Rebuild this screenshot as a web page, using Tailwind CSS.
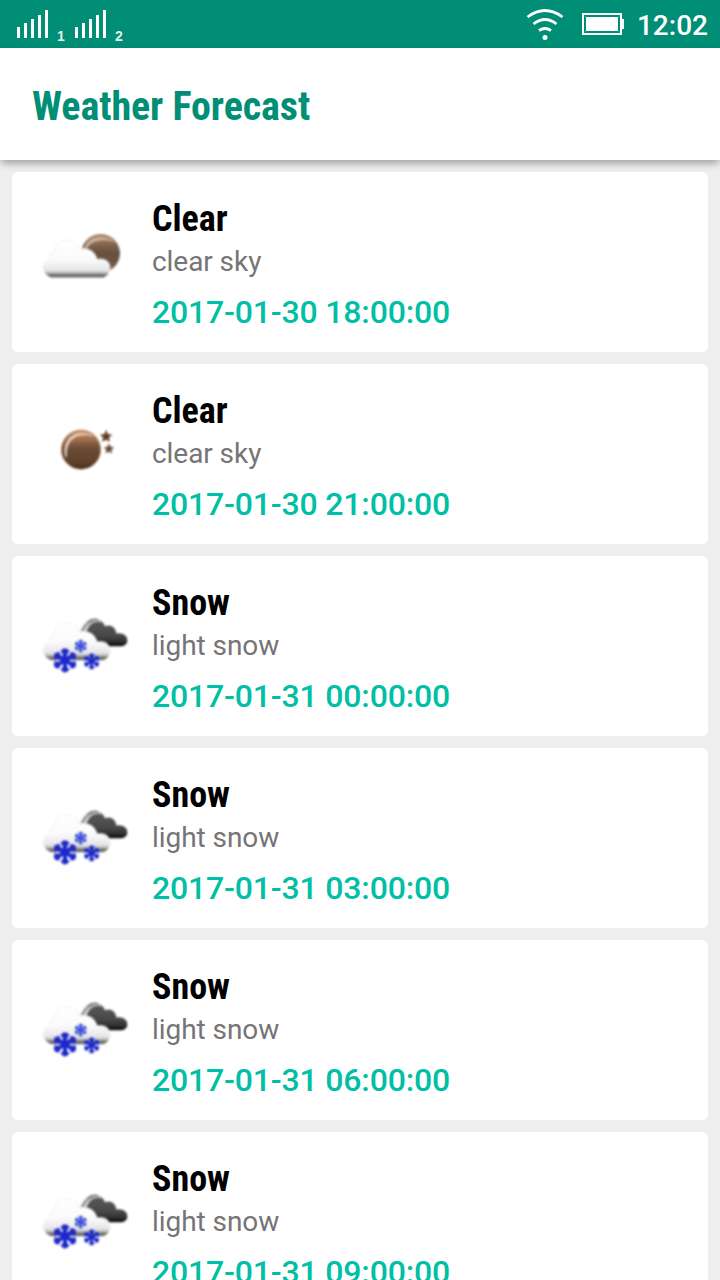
<!DOCTYPE html>
<html lang="en">
<head>
<meta charset="utf-8">
<title>Weather Forecast</title>
<script src="https://cdn.jsdelivr.net/npm/@tailwindcss/browser@4"></script>
</head>
<body class="h-[1280px] w-[720px] overflow-hidden bg-[#eeeeee] font-['Roboto',sans-serif]">
<svg class="absolute size-0" aria-hidden="true">
  <defs>
    <linearGradient id="cloud" x1="0" y1="0" x2="0" y2="1">
      <stop offset="0" stop-color="#ffffff"/><stop offset=".5" stop-color="#fbfbfb"/><stop offset=".78" stop-color="#e9e9e9"/><stop offset=".86" stop-color="#cacaca"/><stop offset=".91" stop-color="#808080"/><stop offset="1" stop-color="#555"/>
    </linearGradient>
    <linearGradient id="moon" x1="0" y1="0" x2="0" y2="1">
      <stop offset="0" stop-color="#c98f68"/><stop offset=".2" stop-color="#aa7550"/><stop offset=".42" stop-color="#755139"/><stop offset=".5" stop-color="#6b4a33"/><stop offset=".82" stop-color="#5e412c"/><stop offset="1" stop-color="#442d1e"/>
    </linearGradient>
    <linearGradient id="moonPale" x1="0" y1="0" x2="0" y2="1">
      <stop offset="0" stop-color="#b58a68"/><stop offset=".3" stop-color="#80614a"/><stop offset=".5" stop-color="#655040"/><stop offset=".75" stop-color="#705640"/><stop offset="1" stop-color="#8b6b50"/>
    </linearGradient>
    <linearGradient id="dark" x1="0" y1="0" x2="0" y2="1">
      <stop offset="0" stop-color="#5c5c5c"/><stop offset=".6" stop-color="#484848"/><stop offset=".82" stop-color="#333"/><stop offset="1" stop-color="#050505"/>
    </linearGradient>
    <path id="cloud-shape" d="M93 203C78 197 68 184 71 168C73 158 81 152 91 149C88 134 97 125 105 121C107 101 121 91 138 91C157 91 171 101 179 117C195 113 225 118 231 148C251 143 270 153 270 172C270 187 263 198 251 203Z"/>
    <g id="flake">
      <path d="M0-33V33M-29-17L29 17M29-17L-29 17" stroke-width="11"/>
      <path d="M-9-29L0-18L9-29M-9 29L0 18L9 29M-30-7L-16-9L-21-22M30 7L16 9L21 22M30-7L16-9L21-22M-30 7L-16 9L-21 22" stroke-width="9"/>
    </g>
    <symbol id="cloudy-night" viewBox="0 0 390 270">
      <circle cx="242" cy="130" r="58" fill="url(#moonPale)"/>
      <path d="M192 115C201 88 225 77 252 82C271 85 280 91 285 97C253 85 217 89 200 117Z" fill="#cbb8a8" opacity=".85"/>
      <use href="#cloud-shape" fill="url(#cloud)" stroke="#e9e9e9" stroke-width="2"/>
    </symbol>
    <symbol id="clear-night" viewBox="0 -9 390 270">
      <circle cx="183" cy="134" r="59" fill="url(#moon)" stroke="#b98b6b" stroke-width="2"/>
      <path d="M137 158C124 120 147 84 184 83C201 83 214 87 223 95C184 83 138 93 141 153Z" fill="#e6d2c4" opacity=".9"/>
      <path d="M258 77L263 88L275 90L266 97L268 109L258 103L248 109L250 97L242 90L254 88Z" fill="#603a24" stroke="#603a24" stroke-width="2"/>
      <path d="M267 117L271 126L281 128L273 134L275 144L267 139L258 144L260 134L253 128L263 126Z" fill="#704a32" stroke="#704a32" stroke-width="2"/>
    </symbol>
    <symbol id="snow" viewBox="0 -18 390 270">
      <path d="M180 99C190 69 207 54 228 56C241 58 250 65 255 79C272 72 288 83 289 101C306 96 322 106 322 121C322 133 313 139 300 139H240L224 112Z" fill="url(#dark)"/>
      <path d="M178 100C188 71 204 58 226 58C235 58 243 62 248 67C225 61 210 70 201 92L187 101Z" fill="#d0d0d0"/>
      <path d="M179 100C190 91 194 70 217 65M190 90C196 70 212 57 234 61" fill="none" stroke="#666" stroke-width="3"/>
      <use href="#cloud-shape" transform="translate(0 -22)" fill="url(#cloud)" stroke="#e9e9e9" stroke-width="2"/>
      <g fill="none" stroke="#1c28cc">
        <use href="#flake" transform="translate(135 181) scale(1.08)"/>
        <use href="#flake" transform="translate(182 138) scale(.56)" stroke="#3448d8"/>
        <use href="#flake" transform="translate(215 184) scale(.72)"/>
      </g>
    </symbol>
  </defs>
</svg>

<div class="flex h-12 items-center justify-between bg-[#008e76] text-white">
  <svg class="h-12 w-[135px]" viewBox="0 0 135 48">
    <path d="M18.5 27V38M25.5 23V38M32.5 19V38M39.5 15V38M46.5 10V38M76.5 27V38M83.5 23V38M90.5 19V38M97.5 15V38M104.5 10V38" fill="none" stroke="#fff" stroke-width="3"/>
    <g fill="#fff" fill-opacity=".9" font-family="Liberation Sans, sans-serif" font-size="14" font-weight="700"><text x="57" y="40.5">1</text><text x="115" y="40.5">2</text></g>
  </svg>
  <div class="flex h-12 items-center pr-3">
    <svg class="h-12 w-[112px]" viewBox="525 0 112 48" fill="none" stroke="#fff">
      <path d="M527.5 17Q545 4 562.5 17M533.5 24Q545 15 556.5 24M539 30.5Q545 26.5 551 30.5" stroke-width="2.8"/>
      <circle cx="545" cy="37.5" r="2.5" fill="#fff" stroke="none"/>
      <path d="M583 14H621V34H583Z" stroke-width="2"/>
      <path d="M585 16H619V32H585ZM621 19H624V29H621Z" fill="#fff" stroke="none"/>
      <path d="M585.5 16.5H618.5V31.5H585.5Z" stroke="#008e76" stroke-width="1"/>
    </svg>
    <span class="mt-[3px] text-[28px] leading-8 font-medium">12:02</span>
  </div>
</div>

<header class="flex h-28 items-center bg-white px-8 shadow-[0_4px_8px_-1px_rgba(0,0,0,0.35)]">
  <h1 class="mt-[5px] font-['Roboto_Condensed','Roboto'] text-[40px] leading-[47px] font-bold tracking-[-0.06px] text-[#008e76]">Weather Forecast</h1>
</header>

<main id="list" class="flex flex-col gap-3 p-3"></main>

<template id="row">
  <article class="flex h-[180px] shrink-0 gap-0.5 rounded-md bg-white pl-2">
    <svg class="mt-[38px] h-[90px] w-[130px] blur-[0.8px]"><use/></svg>
    <div class="pt-[26px]">
      <h2 class="font-['Roboto_Condensed','Roboto'] text-[36px] leading-[42px] font-bold text-black"></h2>
      <p class="mt-[5px] text-[28px] leading-[33px] tracking-[-0.06px] text-[#757575]"></p>
      <time class="mt-[15px] block text-[32px] leading-[38px] font-medium tracking-[-0.17px] text-[#00bfa5]"></time>
    </div>
  </article>
</template>
<script>
  const rows = [
    ['cloudy-night', 'Clear', 'clear sky', '2017-01-30 18:00:00'],
    ['clear-night', 'Clear', 'clear sky', '2017-01-30 21:00:00'],
    ['snow', 'Snow', 'light snow', '2017-01-31 00:00:00'],
    ['snow', 'Snow', 'light snow', '2017-01-31 03:00:00'],
    ['snow', 'Snow', 'light snow', '2017-01-31 06:00:00'],
    ['snow', 'Snow', 'light snow', '2017-01-31 09:00:00']
  ];
  for (const [icon, title, text, time] of rows) {
    const card = document.getElementById('row').content.cloneNode(true);
    card.querySelector('use').setAttribute('href', '#' + icon);
    card.querySelector('h2').textContent = title;
    card.querySelector('p').textContent = text;
    card.querySelector('time').textContent = time;
    document.getElementById('list').append(card);
  }
</script>
</body>
</html>
